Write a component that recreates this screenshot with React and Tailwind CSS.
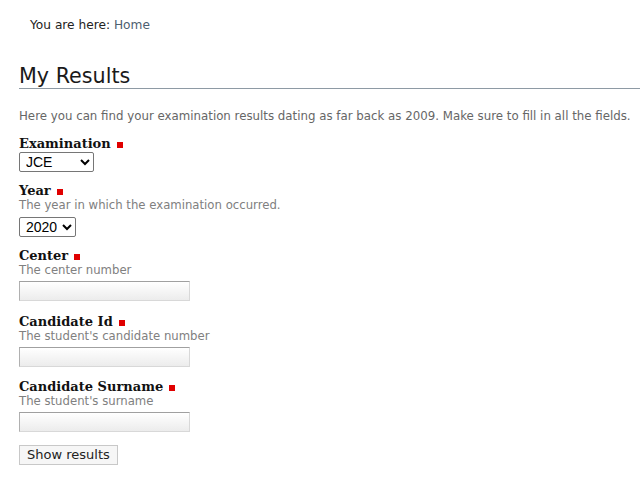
import React from "react";

const Req = () => <span className="inline-block w-[6px] h-[6px] bg-[#e00000] ml-[6px] align-[0px]" />;

function Label({ children }) {
  return (
    <div className="font-['DejaVu_Serif',serif] font-bold text-[13px] leading-[14px] h-[14px] text-[#111]">
      {children}
      <Req />
    </div>
  );
}

function Desc({ children }) {
  return <div className="text-[11.7px] leading-[14px] h-[14px] text-[#808080]">{children}</div>;
}

function TextInput() {
  return (
    <input
      type="text"
      className="block w-[171px] h-[20px] border border-t-[#a0a0a0] border-l-[#b0b0b0] border-r-[#d8d8d8] border-b-[#d8d8d8] bg-gradient-to-b from-white to-[#ececec] outline-none"
    />
  );
}

function Select({ value, options, w }) {
  return (
    <select
      defaultValue={value}
      className={`block ${w} h-[20px] border border-[#767676] rounded-[2px] bg-white text-[14px] leading-[18px] font-['Liberation_Sans',Arial,sans-serif] text-black px-[2px]`}
    >
      {options.map((o) => (
        <option key={o}>{o}</option>
      ))}
    </select>
  );
}

export default function App() {
  return (
    <div className="bg-white min-h-[489px] font-['DejaVu_Sans',Verdana,sans-serif] text-[#333] flow-root">
      <div className="mt-[16px] pl-[30px] text-[12.2px] leading-[18px] text-[#222]">
        You are here: <a className="text-[#4d6070]">Home</a>
      </div>
      <h1 className="mt-[30px] ml-[19px] text-[20.7px] leading-[24px] text-[#1a1a1a] border-b border-[#8e9aa4]">
        My Results
      </h1>
      <p className="mt-[19px] ml-[19px] text-[11.8px] leading-[16px] text-[#666] whitespace-nowrap">
        Here you can find your examination results dating as far back as 2009. Make sure to fill in all the fields.
      </p>
      <div className="ml-[19px] mt-[13px] flex flex-col">
        <div className="mb-[12px]">
          <Label>Examination</Label>
          <div className="mt-[1px]">
            <Select value="JCE" options={["JCE", "MSCE", "PSLCE"]} w="w-[75px]" />
          </div>
        </div>
        <div className="mb-[12px]">
          <Label>Year</Label>
          <Desc>The year in which the examination occurred.</Desc>
          <div className="mt-[5px]">
            <Select value="2020" options={["2020", "2019", "2018"]} w="w-[57px]" />
          </div>
        </div>
        <div className="mb-[14px]">
          <Label>Center</Label>
          <Desc>The center number</Desc>
          <div className="mt-[4px]"><TextInput /></div>
        </div>
        <div className="mb-[13px]">
          <Label>Candidate Id</Label>
          <Desc>The student's candidate number</Desc>
          <div className="mt-[4px]"><TextInput /></div>
        </div>
        <div className="mb-[13px]">
          <Label>Candidate Surname</Label>
          <Desc>The student's surname</Desc>
          <div className="mt-[4px]"><TextInput /></div>
        </div>
        <div>
          <button className="block h-[20px] px-[7px] border border-[#c8c8c8] bg-[#f6f6f6] text-[13px] text-[#222] leading-[18px]">
            Show results
          </button>
        </div>
      </div>
    </div>
  );
}
